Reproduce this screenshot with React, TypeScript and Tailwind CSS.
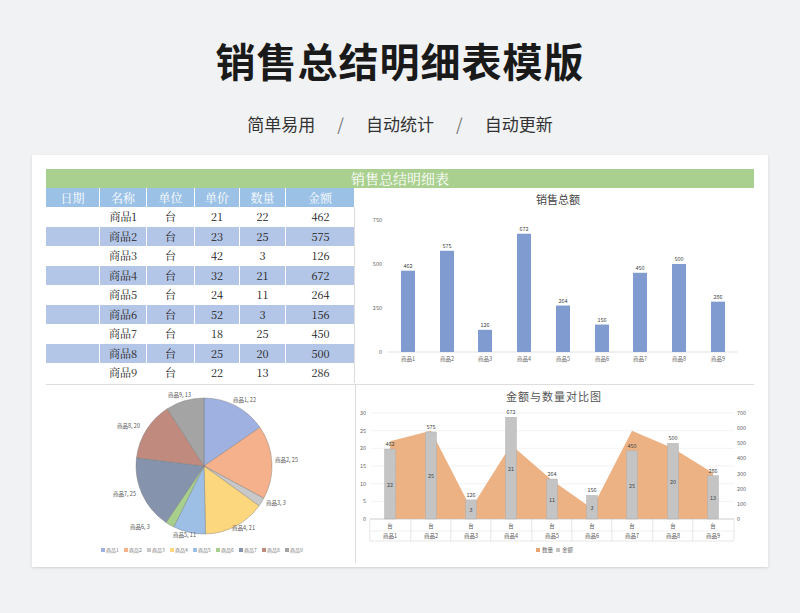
import React from "react";

const rows = [
  ["商品1", 21, 22, 462], ["商品2", 23, 25, 575], ["商品3", 42, 3, 126],
  ["商品4", 32, 21, 672], ["商品5", 24, 11, 264], ["商品6", 52, 3, 156],
  ["商品7", 18, 25, 450], ["商品8", 25, 20, 500], ["商品9", 22, 13, 286],
] as const;
const serif = { fontFamily: '"Noto Serif CJK SC","Liberation Serif","Noto Sans CJK SC",serif' };
const F = '"Noto Sans CJK SC","Liberation Sans",sans-serif';

function BarChart() {
  const xs = [410, 449, 487, 526, 565, 604, 642, 681, 720];
  return (
    <svg width="393" height="194" viewBox="357 201 393 194" fontFamily={F}>
      <text x="560" y="217" fontSize="11" textAnchor="middle" fill="#444">销售总额</text>
      {[0, 250, 500, 750].map((v) => {
        const y = 365 - (v / 750) * 132;
        return (
          <g key={v}>
            <text x="384" y={y + 2} fontSize="5.5" textAnchor="end" fill="#666">{v}</text>
            {v === 0 && <line x1="390" x2="740" y1={y} y2={y} stroke="#ccc" strokeWidth="0.6" />}
          </g>
        );
      })}
      {rows.map((r, i) => {
        const h = (r[3] / 750) * 132;
        return (
          <g key={i}>
            <rect x={xs[i] - 7} y={365 - h} width="14" height={h} fill="#7f9bcf" />
            <text x={xs[i]} y={362 - h} fontSize="5.5" textAnchor="middle" fill="#444">{r[3]}</text>
            <text x={xs[i]} y="374" fontSize="5.5" textAnchor="middle" fill="#666">{r[0]}</text>
          </g>
        );
      })}
    </svg>
  );
}

function Combo() {
  const xs = [391, 432, 472, 512, 553, 593, 633, 674, 714];
  const base = 531, H = 106;
  const qy = (q: number) => base - (q / 30) * H;
  const ay = (a: number) => base - (a / 700) * H;
  const pts = `${xs[0]},${base} ` + rows.map((r, i) => `${xs[i]},${qy(r[2])}`).join(" ") + ` ${xs[8]},${base}`;
  return (
    <svg width="393" height="178" viewBox="357 397 393 178" fontFamily={F}>
      <text x="555" y="413" fontSize="11" textAnchor="middle" fill="#555" letterSpacing="1">金额与数量对比图</text>
      {[0, 5, 10, 15, 20, 25, 30].map((v) => (
        <g key={v}>
          <line x1="372" x2="735" y1={qy(v)} y2={qy(v)} stroke="#e6e6e6" strokeWidth="0.5" />
          <text x="367" y={qy(v) + 2} fontSize="5.5" textAnchor="end" fill="#666">{v}</text>
        </g>
      ))}
      {[0, 100, 200, 300, 400, 500, 600, 700].map((v) => (
        <text key={v} x="738" y={ay(v) + 2} fontSize="5.5" fill="#666">{v}</text>
      ))}
      <polygon points={pts} fill="#e9a56f" opacity="0.85" />
      {rows.map((r, i) => {
        const y = ay(r[3]);
        return (
          <g key={i}>
            <rect x={xs[i] - 5.5} y={y} width="11" height={base - y} fill="#c4c4c4" stroke="#aaa" strokeWidth="0.4" />
            <text x={xs[i]} y={y - 3} fontSize="5.5" textAnchor="middle" fill="#444">{r[3]}</text>
            <text x={xs[i]} y={(y + base) / 2 + 3} fontSize="5.5" textAnchor="middle" fill="#444">{r[2]}</text>
            <text x={xs[i]} y="540" fontSize="5.5" textAnchor="middle" fill="#555">台</text>
            <text x={xs[i]} y="550" fontSize="5.5" textAnchor="middle" fill="#555">{r[0]}</text>
            <line x1={xs[i] - 20.2} x2={xs[i] - 20.2} y1={base} y2="553" stroke="#ccc" strokeWidth="0.5" />
          </g>
        );
      })}
      <line x1="735" x2="735" y1={base} y2="553" stroke="#ccc" strokeWidth="0.5" />
      <line x1="371" x2="735" y1={base} y2={base} stroke="#bbb" strokeWidth="0.6" />
      <line x1="371" x2="735" y1="543" y2="543" stroke="#ddd" strokeWidth="0.5" />
      <line x1="371" x2="735" y1="553" y2="553" stroke="#ccc" strokeWidth="0.5" />
      <rect x="537" y="560" width="4" height="4" fill="#e9a56f" />
      <text x="543" y="564" fontSize="5.5" fill="#666">数量</text>
      <rect x="557" y="560" width="4" height="4" fill="#c4c4c4" />
      <text x="563" y="564" fontSize="5.5" fill="#666">金额</text>
    </svg>
  );
}

function Pie() {
  const colors = ["#9fb1e0", "#f5b08c", "#c8c8c8", "#fdd77d", "#9dbfe6", "#a6d08c", "#8593ad", "#c08b7e", "#a4a4a4"];
  const cx = 204, cy = 478, R = 68;
  const total = rows.reduce((s, r) => s + r[2], 0);
  let a0 = -Math.PI / 2;
  const labels: [number, number][] = [
    [233, 414], [275, 474], [266, 517], [232, 542],
    [173, 549], [130, 541], [113, 508], [117, 440], [168, 409],
  ];
  return (
    <svg width="309" height="178" viewBox="46 397 309 178" fontFamily={F}>
      {rows.map((r, i) => {
        const a1 = a0 + (r[2] / total) * Math.PI * 2;
        const d = `M${cx},${cy} L${cx + R * Math.cos(a0)},${cy + R * Math.sin(a0)} A${R},${R} 0 ${a1 - a0 > Math.PI ? 1 : 0} 1 ${cx + R * Math.cos(a1)},${cy + R * Math.sin(a1)} Z`;
        a0 = a1;
        return <path key={i} d={d} fill={colors[i]} stroke="#777" strokeWidth="0.4" />;
      })}
      {rows.map((r, i) => (
        <text key={i} x={labels[i][0]} y={labels[i][1]} fontSize="5.5" fill="#555">{r[0]}, {r[2]}</text>
      ))}
      {rows.map((r, i) => (
        <g key={"l" + i}>
          <rect x={101 + i * 23} y="560" width="4" height="4" fill={colors[i]} />
          <text x={106 + i * 23} y="564" fontSize="5" fill="#777">{r[0]}</text>
        </g>
      ))}
    </svg>
  );
}

export default function App() {
  return (
    <div className="w-[800px] h-[613px] bg-[#f1f2f4] flex flex-col items-center" style={{ fontFamily: F }}>
      <h1 className="mt-[34px] text-[40px] leading-[52px] font-bold text-[#1a1a1a] tracking-[1px]">销售总结明细表模版</h1>
      <div className="mt-[26px] text-[17px] leading-[24px] text-[#333] flex gap-[22px]">
        <span>简单易用</span><span className="text-[#777]">/</span><span>自动统计</span><span className="text-[#777]">/</span><span>自动更新</span>
      </div>
      <div className="mt-[19px] w-[736px] h-[412px] bg-white shadow-sm px-[14px] pt-[14px]">
        <div className="h-[19px] bg-[#a9d08e] text-white text-[14px] leading-[19px] text-center" style={serif}>销售总结明细表</div>
        <div className="flex">
          <div className="w-[309px] border-r border-[#ddd]" style={serif}>
            <div className="grid grid-cols-[54px_47px_48px_45px_46px_69px] h-[19px] bg-[#9bc2e6] text-white text-[12px] leading-[19px] text-center">
              {["日期", "名称", "单位", "单价", "数量", "金额"].map((h) => (
                <div key={h} className="border-r border-white">{h}</div>
              ))}
            </div>
            {rows.map((r, i) => (
              <div key={i} className={`grid grid-cols-[54px_47px_48px_45px_46px_69px] h-[19.5px] text-[11px] leading-[19.5px] text-center text-[#222] ${i % 2 ? "bg-[#b4c6e7]" : "bg-white"}`}>
                <div className="border-r border-white"></div>
                <div className="border-r border-white">{r[0]}</div>
                <div className="border-r border-white">台</div>
                <div className="border-r border-white">{r[1]}</div>
                <div className="border-r border-white">{r[2]}</div>
                <div>{r[3]}</div>
              </div>
            ))}
          </div>
          <BarChart />
        </div>
        <div className="flex border-t border-[#ddd] mt-[1px]">
          <div className="border-r border-[#ddd]"><Pie /></div>
          <Combo />
        </div>
      </div>
    </div>
  );
}
